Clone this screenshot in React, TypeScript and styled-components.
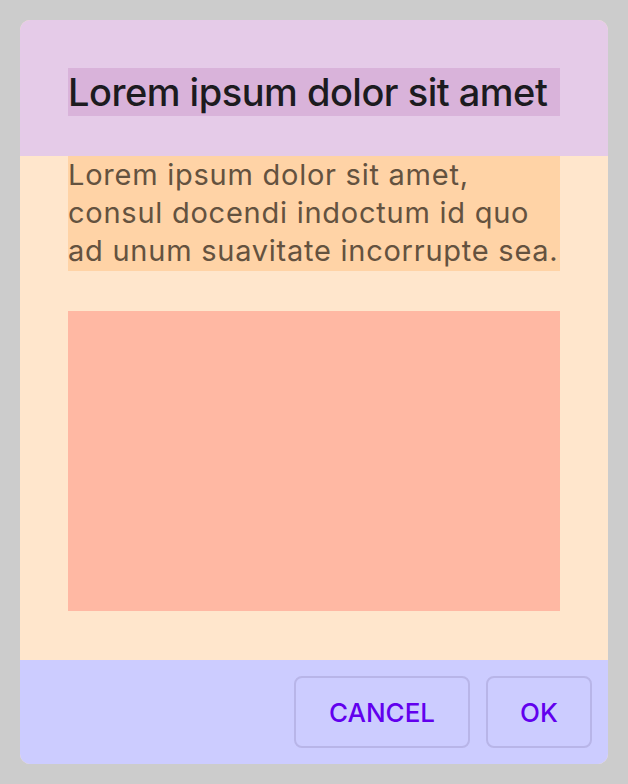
import React from "react";
import styled, { createGlobalStyle } from "styled-components";

const Global = createGlobalStyle`
  html, body { margin: 0; padding: 0; background: #cccccc; }
  body { font-family: Inter, "Noto Sans", sans-serif; }
`;

const Page = styled.div`
  width: 628px;
  height: 784px;
  padding: 20px;
  box-sizing: border-box;
`;

const Dialog = styled.div`
  width: 588px;
  height: 744px;
  border-radius: 10px;
  overflow: hidden;
  display: flex;
  flex-direction: column;
  background: #ffe6cc;
`;

const Header = styled.div`
  background: #e5cbe8;
  padding: 48px 48px 40px;
`;

const Title = styled.h1`
  margin: 0;
  height: 48px;
  background: #d9b3da;
  color: #1c1b1f;
  font-size: 38px;
  font-weight: 500;
  letter-spacing: -0.5px;
  line-height: 48px;
  white-space: nowrap;
`;

const Body = styled.div`
  flex: 1;
  padding: 0 48px;
  display: flex;
  flex-direction: column;
  gap: 40px;
`;

const Text = styled.p`
  margin: 0;
  background: #ffd3a6;
  color: #64523f;
  font-size: 29px;
  letter-spacing: 0.75px;
  line-height: 38px;
  padding-bottom: 1px;
`;

const Media = styled.div`
  height: 300px;
  background: #ffb8a3;
`;

const Footer = styled.div`
  background: #ccccff;
  height: 104px;
  box-sizing: border-box;
  padding: 16px;
  display: flex;
  justify-content: flex-end;
  gap: 16px;
`;

const Button = styled.button<{ $w: number }>`
  width: ${(p) => p.$w}px;
  height: 72px;
  border: 2px solid #b8b5e8;
  border-radius: 8px;
  background: transparent;
  color: #6200ee;
  font-family: Inter, "Noto Sans", sans-serif;
  font-size: 26px;
  font-weight: 500;
  padding: 0;
`;

export default function App() {
  return (
    <Page>
      <Global />
      <Dialog>
        <Header>
          <Title>Lorem ipsum dolor sit amet</Title>
        </Header>
        <Body>
          <Text>
            Lorem ipsum dolor sit amet, consul docendi indoctum id quo ad unum suavitate incorrupte sea.
          </Text>
          <Media />
        </Body>
        <Footer>
          <Button $w={176}>CANCEL</Button>
          <Button $w={106}>OK</Button>
        </Footer>
      </Dialog>
    </Page>
  );
}
